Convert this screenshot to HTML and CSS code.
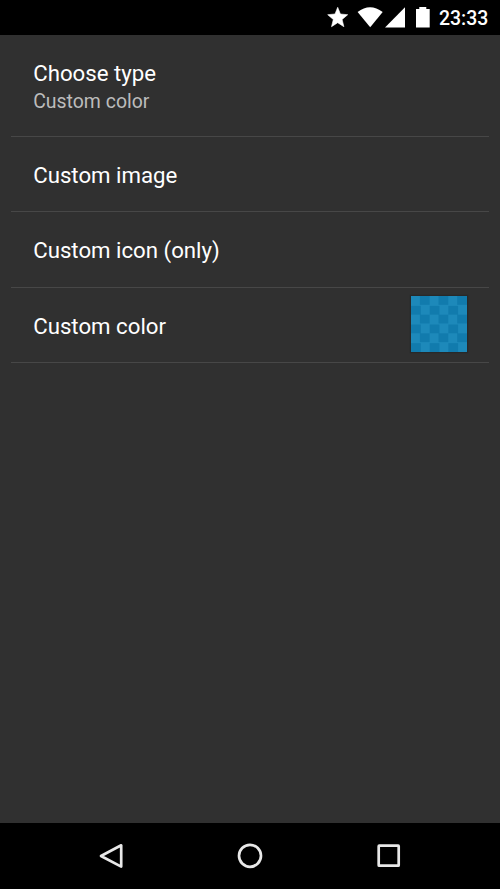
FILE: index.html
```html
<!DOCTYPE html>
<html lang="en">
<head>
<meta charset="utf-8">
<title>Custom color</title>
<link rel="stylesheet" href="styles.css">
</head>
<body>
<header class="status">
  <svg class="status-icons" viewBox="0 0 112 34" aria-hidden="true">
    <path stroke="#fff" stroke-width=".6" stroke-linejoin="round" d="M17.700 7.300l2.700 6.700 7.300.7-5.600 4.800 1.800 7.200-6.200-4-6.200 4 1.800-7.200-5.600-4.800 7.300-.7z"/>
    <path d="M37.600 12Q50 2.600 62.700 12L50.200 27.200z"/>
    <path d="M85 7.300V27.400H65z"/>
    <path d="M99.300 7h7v2h3.400v18.400H96V9h3.300z"/>
  </svg>
  <span class="time">23:33</span>
</header>
<main class="settings">
  <section class="row row-first"><span class="title">Choose type</span><span class="summary">Custom color</span></section>
  <section class="row"><span class="title">Custom image</span></section>
  <section class="row"><span class="title">Custom icon (only)</span></section>
  <section class="row"><span class="title">Custom color</span><span class="swatch"></span></section>
</main>
<nav class="navbar">
  <svg viewBox="0 0 30 30" aria-label="Back"><path d="M25.200 4.300V25.600L5 15z"/></svg>
  <svg viewBox="0 0 30 30" aria-label="Home"><circle cx="15" cy="14.800" r="11"/></svg>
  <svg viewBox="0 0 30 30" aria-label="Recents"><rect x="4.700" y="4.700" width="20" height="20" rx=".5"/></svg>
</nav>
</body>
</html>
```
FILE: styles.css
```css
* { box-sizing: border-box; }
body {
  margin: 0;
  height: 889px;
  display: flex;
  flex-direction: column;
  overflow: hidden;
  background: #303030;
  color: #fff;
  font-family: Roboto, "Liberation Sans", sans-serif;
}
.status {
  height: 34.7px;
  flex: none;
  display: flex;
  justify-content: flex-end;
  align-items: flex-start;
  background: #000;
}
.status-icons { width: 112px; height: 34px; margin-right: 7px; fill: #fff; }
.time { width: 61px; font-size: 19.44px; font-weight: 500; line-height: 38px; }
.settings { flex: 1; padding: 0 11px; }
.row {
  height: 75.5px;
  padding: 0 22.2px;
  display: flex;
  align-items: center;
  justify-content: space-between;
  box-shadow: inset 0 -1px #474747;
}
.row-first {
  height: 102px;
  padding-top: 2px;
  flex-direction: column;
  align-items: flex-start;
  justify-content: center;
}
.title { font-size: 22.22px; line-height: 30px; }
.row:not(.row-first) .title { padding-top: 1px; }
.summary { font-size: 19.44px; line-height: 26px; padding-top: 1px; color: #bcbcbc; }
.swatch {
  width: 56px;
  height: 56px;
  margin-bottom: 2px;
  background: repeating-conic-gradient(#117bad 0 25%, #1d89ba 0 50%) 0 0 / 18.667px 18.667px;
  box-shadow: 0 0 1px 1px #28292a;
}
.navbar {
  height: 66.4px;
  flex: none;
  display: flex;
  justify-content: center;
  align-items: center;
  gap: 109px;
  background: #000;
}
.navbar svg { width: 30px; height: 30px; fill: none; stroke: #e8e8e8; stroke-width: 2.7; stroke-linejoin: round; }
```
